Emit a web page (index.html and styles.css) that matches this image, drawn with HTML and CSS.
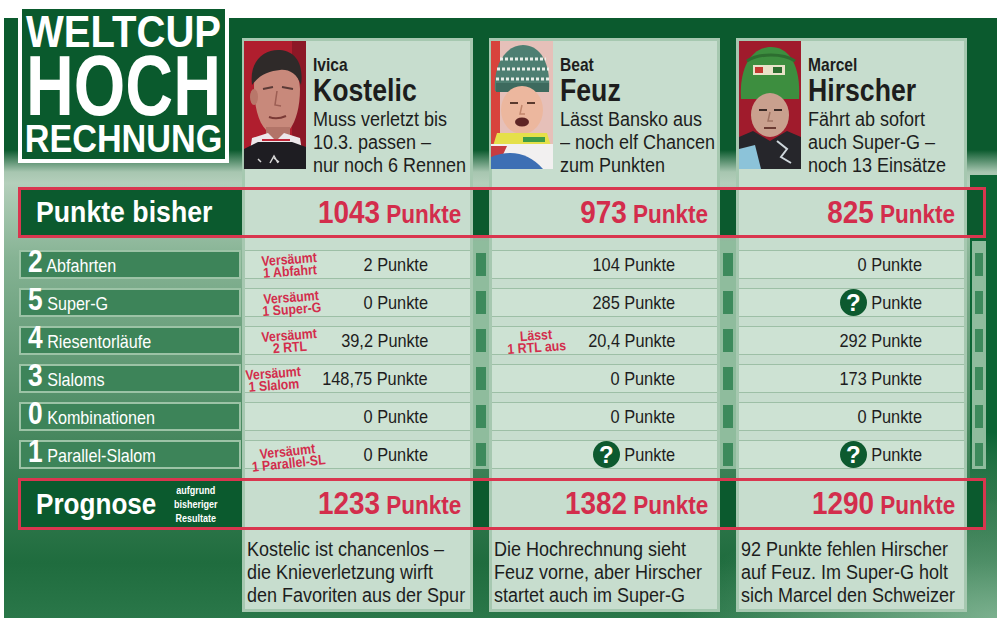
FILE: index.html
```html
<!DOCTYPE html>
<html lang="de">
<head>
<meta charset="utf-8">
<title>Weltcup Hochrechnung</title>
<link rel="stylesheet" href="styles.css">
</head>
<body>
<div class="board">
  <div class="grid">
    <div class="band r2"></div>
    <div class="frame r2"></div>
    <div class="band pband r9"></div>
    <div class="frame pband r9"></div>

    <div class="card k1"></div>
    <div class="card k2"></div>
    <div class="card k3"></div>

    <div class="title k0 r1">
      <div class="tl t1"><span>WELTCUP</span></div>
      <div class="tl t2"><span>HOCH</span></div>
      <div class="tl t3"><span>RECHNUNG</span></div>
    </div>

    <div class="player k1 r1">
      <svg class="photo" viewBox="0 0 62 128" width="62" height="128">
        <rect width="62" height="128" fill="#b01e2e"/>
        <rect x="48" width="14" height="128" fill="#8c1826"/>
        <path d="M10 44 C10 28 22 22 34 23 C48 24 56 34 56 48 C56 66 52 80 46 88 C40 95 28 95 22 89 C14 81 10 64 10 44 Z" fill="#c8897b"/>
        <ellipse cx="10" cy="56" rx="4" ry="8" fill="#b8776a"/>
        <path d="M8 44 C5 20 20 8 36 9 C52 10 60 24 57 44 C53 32 44 28 36 29 C26 30 16 33 8 44 Z" fill="#2f2a29"/>
        <path d="M19 48 L29 46 M38 46 L49 48" stroke="#5a3a36" stroke-width="2"/>
        <path d="M33 50 L31 64 L37 65" stroke="#9c5e54" fill="none" stroke-width="1.5"/>
        <path d="M25 76 Q33 79 42 75" stroke="#7a3a36" stroke-width="2" fill="none"/>
        <rect x="22" y="86" width="24" height="14" fill="#b27468"/>
        <path d="M8 97 L24 92 L32 100 L40 92 L56 97 L58 110 L6 110 Z" fill="#ece8ea"/>
        <path d="M18 99 L46 99" stroke="#c0283a" stroke-width="2"/>
        <path d="M0 108 L14 101 L48 101 L62 106 L62 128 L0 128 Z" fill="#1e1d22"/>
        <path d="M26 122 l4 -7 l4 7 M30 117 l5 4 M14 118 l3 3" stroke="#d8d8d8" stroke-width="1.5" fill="none"/>
      </svg>
      <div class="ptext">
        <div class="first">Ivica</div>
        <div class="last">Kostelic</div>
        <div class="desc">Muss verletzt bis<br>10.3. passen –<br>nur noch 6 Rennen</div>
      </div>
    </div>

    <div class="player k2 r1">
      <svg class="photo" viewBox="0 0 62 128" width="62" height="128">
        <rect width="62" height="128" fill="#e6c0b9"/>
        <rect width="9" height="128" fill="#d8433c"/>
        <path d="M4 50 C2 22 16 4 32 4 C48 4 60 20 58 50 Z" fill="#4e7f72"/>
        <path d="M9 18 H55 M6 28 H58 M5 38 H58" stroke="#e9efe9" stroke-width="3" stroke-dasharray="3 2"/>
        <rect x="5" y="42" width="53" height="9" fill="#3d6a5e"/>
        <ellipse cx="31" cy="69" rx="21" ry="24" fill="#ecb79e"/>
        <path d="M19 62 h8 M36 62 h8" stroke="#5a3a2e" stroke-width="2"/>
        <path d="M31 64 L29 73 L34 73" stroke="#c2866c" stroke-width="1.5" fill="none"/>
        <ellipse cx="31" cy="81" rx="7" ry="4.5" fill="#5e2424"/>
        <path d="M6 92 L56 92 L60 105 L2 105 Z" fill="#e5e04a"/>
        <rect x="32" y="96" width="22" height="5" fill="#3e9b48"/>
        <path d="M0 103 L62 103 L62 128 L0 128 Z" fill="#f2f0f0"/>
        <path d="M0 105 L16 105 L10 118 L0 118 Z" fill="#c73c40"/>
        <path d="M0 116 C20 108 38 112 52 128 L0 128 Z" fill="#3d6fb4"/>
      </svg>
      <div class="ptext">
        <div class="first">Beat</div>
        <div class="last">Feuz</div>
        <div class="desc">Lässt Bansko aus<br>– noch elf Chancen<br>zum Punkten</div>
      </div>
    </div>

    <div class="player k3 r1">
      <svg class="photo" viewBox="0 0 62 128" width="62" height="128">
        <rect width="62" height="128" fill="#a01b2c"/>
        <path d="M2 58 C0 24 14 6 32 6 C50 6 62 24 60 58 Z" fill="#3d8e3f"/>
        <path d="M8 20 C20 12 44 12 56 20" stroke="#2d6e30" stroke-width="3" fill="none"/>
        <rect x="14" y="24" width="32" height="10" fill="#e8e2c8"/>
        <rect x="16" y="26" width="8" height="6" fill="#c23a32"/>
        <rect x="34" y="26" width="9" height="6" fill="#2d6e30"/>
        <ellipse cx="31" cy="74" rx="19" ry="22" fill="#c9a08e"/>
        <path d="M20 69 h8 M35 69 h8" stroke="#3a2a26" stroke-width="2"/>
        <path d="M31 71 L29 80 L34 80" stroke="#9e7262" stroke-width="1.5" fill="none"/>
        <path d="M25 87 h12" stroke="#6a3a32" stroke-width="2"/>
        <path d="M0 96 L14 90 L31 100 L48 90 L62 96 L62 128 L0 128 Z" fill="#26262b"/>
        <path d="M0 108 L16 104 L22 128 L0 128 Z" fill="#8cc3d9"/>
        <path d="M38 100 l10 8 l-6 8 l10 6" stroke="#cfd7dc" stroke-width="2" fill="none"/>
      </svg>
      <div class="ptext">
        <div class="first">Marcel</div>
        <div class="last">Hirscher</div>
        <div class="desc">Fährt ab sofort<br>auch Super-G –<br>noch 13 Einsätze</div>
      </div>
    </div>

    <!-- Punkte bisher -->
    <div class="blab k0 r2"><span class="sx">Punkte bisher</span></div>
    <div class="big k1 r2"><span class="bv"><span class="bn">1043</span><span class="bp"> Punkte</span></span></div>
    <div class="big k2 r2"><span class="bv"><span class="bn">973</span><span class="bp"> Punkte</span></span></div>
    <div class="big k3 r2"><span class="bv"><span class="bn">825</span><span class="bp"> Punkte</span></span></div>

    <!-- row 1 -->
    <div class="lab k0 r3"><span class="li"><span class="num">2</span> Abfahrten</span></div>
    <div class="val k1 r3"><span class="note n1">Versäumt<br>1 Abfahrt</span><span class="v">2 Punkte</span></div>
    <div class="val k2 r3"><span class="v">104 Punkte</span></div>
    <div class="val k3 r3"><span class="v">0 Punkte</span></div>
    <div class="stub k1 r3"></div><div class="stub k2 r3"></div><div class="stub rs kr r3"></div>

    <!-- row 2 -->
    <div class="lab k0 r4"><span class="li"><span class="num">5</span> Super-G</span></div>
    <div class="val k1 r4"><span class="note n1">Versäumt<br>1 Super-G</span><span class="v">0 Punkte</span></div>
    <div class="val k2 r4"><span class="v">285 Punkte</span></div>
    <div class="val k3 r4"><span class="q">?</span><span class="v">Punkte</span></div>
    <div class="stub k1 r4"></div><div class="stub k2 r4"></div><div class="stub rs kr r4"></div>

    <!-- row 3 -->
    <div class="lab k0 r5"><span class="li"><span class="num">4</span> Riesentorläufe</span></div>
    <div class="val k1 r5"><span class="note n1">Versäumt<br>2 RTL</span><span class="v">39,2 Punkte</span></div>
    <div class="val k2 r5"><span class="note n3">Lässt<br>1 RTL aus</span><span class="v">20,4 Punkte</span></div>
    <div class="val k3 r5"><span class="v">292 Punkte</span></div>
    <div class="stub k1 r5"></div><div class="stub k2 r5"></div><div class="stub rs kr r5"></div>

    <!-- row 4 -->
    <div class="lab k0 r6"><span class="li"><span class="num">3</span> Slaloms</span></div>
    <div class="val k1 r6"><span class="note n1">Versäumt<br>1 Slalom</span><span class="v">148,75 Punkte</span></div>
    <div class="val k2 r6"><span class="v">0 Punkte</span></div>
    <div class="val k3 r6"><span class="v">173 Punkte</span></div>
    <div class="stub k1 r6"></div><div class="stub k2 r6"></div><div class="stub rs kr r6"></div>

    <!-- row 5 -->
    <div class="lab k0 r7"><span class="li"><span class="num">0</span> Kombinationen</span></div>
    <div class="val k1 r7"><span class="v">0 Punkte</span></div>
    <div class="val k2 r7"><span class="v">0 Punkte</span></div>
    <div class="val k3 r7"><span class="v">0 Punkte</span></div>
    <div class="stub k1 r7"></div><div class="stub k2 r7"></div><div class="stub rs kr r7"></div>

    <!-- row 6 -->
    <div class="lab k0 r8"><span class="li"><span class="num">1</span> Parallel-Slalom</span></div>
    <div class="val k1 r8"><span class="note n2">Versäumt<br>1 Parallel-SL</span><span class="v">0 Punkte</span></div>
    <div class="val k2 r8"><span class="q">?</span><span class="v">Punkte</span></div>
    <div class="val k3 r8"><span class="q">?</span><span class="v">Punkte</span></div>
    <div class="stub k1 r8"></div><div class="stub k2 r8"></div><div class="stub rs kr r8"></div>

    <!-- Prognose -->
    <div class="plab k0 r9"><span class="pbig">Prognose</span><span class="psmall">aufgrund<br>bisheriger<br>Resultate</span></div>
    <div class="big pv k1 r9"><span class="bv"><span class="bn">1233</span><span class="bp"> Punkte</span></span></div>
    <div class="big pv k2 r9"><span class="bv"><span class="bn">1382</span><span class="bp"> Punkte</span></span></div>
    <div class="big pv k3 r9"><span class="bv"><span class="bn">1290</span><span class="bp"> Punkte</span></span></div>

    <!-- footer -->
    <div class="foot k1 r10"><div class="ft">Kostelic ist chancenlos –<br>die Knieverletzung wirft<br>den Favoriten aus der Spur</div></div>
    <div class="foot k2 r10"><div class="ft">Die Hochrechnung sieht<br>Feuz vorne, aber Hirscher<br>startet auch im Super-G</div></div>
    <div class="foot k3 r10"><div class="ft">92 Punkte fehlen Hirscher<br>auf Feuz. Im Super-G holt<br>sich Marcel den Schweizer</div></div>
  </div>
</div>
</body>
</html>
```

FILE: styles.css
```css
:root {
  --fc: "Liberation Sans", Arial, sans-serif;
  --red: #d32d4c;
  --frame: #d9364f;
  --dk: #0b5a2e;
  --card: #c7ddce;
  --cell: #cde2d3;
}

html, body {
  margin: 0;
  background: #ffffff;
}

body {
  font-family: var(--fc);
  color: #1d1d1d;
}

.board {
  margin: 18px 3px 4px 4px;
  height: 600px;
  box-sizing: border-box;
  padding: 0 0 6px 14px;
  background:
    linear-gradient(to bottom, #0b6434 0, #0b6434 78%, rgba(11, 100, 52, 0)) right 0 top 157px / 27px 330px no-repeat,
    radial-gradient(ellipse 320px 120px at 100% 100%, rgba(150, 195, 165, 0.75), rgba(150, 195, 165, 0)),
    linear-gradient(to bottom, #0b5a2e 0, #0b5a2e 132px, #a7c6b0 154px, #b4cfbb 165px, #86b394 240px, #3f8258 440px, #1f6c3e 545px, #2a7749 600px);
}

.grid {
  display: grid;
  grid-template-columns: 224px 247px 247px 231px 19px;
  grid-template-rows: 169px 54px repeat(6, 38px) 61px 82px;
}

.k0 { grid-column: 1; }
.k1 { grid-column: 2; }
.k2 { grid-column: 3; }
.k3 { grid-column: 4; }
.kr { grid-column: 5; }

.r1 { grid-row: 1; }
.r2 { grid-row: 2; }
.r3 { grid-row: 3; }
.r4 { grid-row: 4; }
.r5 { grid-row: 5; }
.r6 { grid-row: 6; }
.r7 { grid-row: 7; }
.r8 { grid-row: 8; }
.r9 { grid-row: 9; }
.r10 { grid-row: 10; }

/* red-framed bands */
.band,
.frame {
  grid-column: 1 / 6;
  align-self: start;
  height: 51px;
  box-sizing: border-box;
}
.band {
  background: var(--dk);
  z-index: 0;
}
.frame {
  border: 3px solid var(--frame);
  z-index: 5;
}
.band.pband,
.frame.pband {
  margin-top: 9px;
  height: 52px;
}

/* player cards */
.card {
  grid-row: 1 / 11;
  margin-top: 20px;
  background: var(--card);
  border: 3px solid #a6c8b0;
  z-index: 1;
}
.card.k1,
.card.k2 {
  margin-right: 16px;
}

/* title */
.title {
  z-index: 3;
  justify-self: start;
  align-self: start;
  margin-top: -13px;
  width: 211px;
  height: 158px;
  box-sizing: border-box;
  border: 4px solid #ffffff;
  background: #0a5a2d;
  color: #ffffff;
  font-weight: 700;
  white-space: nowrap;
  padding-top: 5px;
}
.tl {
  display: flex;
  justify-content: center;
}
.t1 {
  font-size: 45px;
  line-height: 36px;
  transform: scaleX(0.89);
}
.t2 {
  font-size: 86px;
  line-height: 66px;
  margin-top: 2px;
  transform: scaleX(0.77);
}
.t3 {
  font-size: 38px;
  line-height: 34px;
  margin-top: 4px;
  transform: scaleX(0.9);
}

/* player header */
.player {
  z-index: 2;
  display: flex;
  align-items: flex-start;
  padding: 23px 0 0 2px;
}
.player.k3 {
  padding-left: 3px;
}
.photo {
  display: block;
  flex: none;
}
.ptext {
  margin-left: 7px;
  margin-top: 14px;
  white-space: nowrap;
}
.first,
.last,
.desc {
  transform-origin: left center;
}
.first {
  font-size: 19px;
  line-height: 19px;
  font-weight: 700;
  transform: scaleX(0.82);
}
.last {
  font-size: 31px;
  line-height: 34px;
  font-weight: 700;
  transform: scaleX(0.86);
}
.desc {
  font-size: 20px;
  line-height: 23px;
  transform: scaleX(0.9);
}

/* Punkte bisher + Prognose */
.blab {
  z-index: 3;
  align-self: start;
  height: 51px;
  display: flex;
  align-items: center;
  padding-left: 18px;
  color: #ffffff;
  font-size: 29px;
  font-weight: 700;
  white-space: nowrap;
}
.sx {
  display: inline-block;
  transform: scaleX(0.92);
  transform-origin: left center;
}
.big {
  z-index: 3;
  align-self: start;
  height: 51px;
  display: flex;
  align-items: center;
  justify-content: flex-end;
  padding-right: 12px;
  color: var(--red);
  font-weight: 700;
  white-space: nowrap;
}
.big.k1,
.big.k2 {
  margin-right: 16px;
}
.big.pv {
  margin-top: 9px;
  height: 52px;
}
.bv {
  display: inline-block;
  transform: scaleX(0.9);
  transform-origin: right center;
}
.bn {
  font-size: 31px;
}
.bp {
  font-size: 25px;
}

.plab {
  z-index: 3;
  align-self: start;
  margin-top: 9px;
  height: 52px;
  display: flex;
  align-items: center;
  padding-left: 18px;
  color: #ffffff;
  font-weight: 700;
  white-space: nowrap;
}
.pbig {
  display: inline-block;
  font-size: 30px;
  transform: scaleX(0.87);
  transform-origin: left center;
}
.psmall {
  display: inline-block;
  font-size: 11px;
  line-height: 14px;
  text-align: center;
  transform: scaleX(0.82);
  transform-origin: left center;
}

/* data rows */
.lab {
  z-index: 2;
  align-self: start;
  margin: 9px 1px 0 1px;
  height: 29px;
  box-sizing: border-box;
  background: #3d8459;
  border: 2px solid #9cc3a6;
  padding-left: 7px;
  color: #ffffff;
  font-size: 19px;
  line-height: 22px;
  white-space: nowrap;
}
.li {
  display: inline-block;
  transform: scaleX(0.85);
  transform-origin: left center;
}
.num {
  font-size: 31px;
  line-height: 20px;
  font-weight: 700;
}

.val {
  z-index: 2;
  align-self: start;
  margin: 9px 19px 0 3px;
  height: 29px;
  box-sizing: border-box;
  background: var(--cell);
  border-top: 1px solid #9dbfa6;
  border-bottom: 1px solid #9dbfa6;
  display: flex;
  align-items: center;
  justify-content: flex-end;
  padding-right: 42px;
  font-size: 19px;
  white-space: nowrap;
}
.val.k3 {
  margin-right: 3px;
}
.v {
  display: inline-block;
  transform: scaleX(0.86);
  transform-origin: right center;
}

.note {
  margin-right: auto;
  margin-left: 13px;
  color: var(--red);
  font-weight: 700;
  font-size: 14px;
  line-height: 12px;
  text-align: center;
  transform: rotate(-4deg) scaleX(0.88);
}
.note.n2 {
  margin-left: 1px;
  margin-top: 4px;
  transform: rotate(-6deg) scaleX(0.88);
}
.note.n3 {
  margin-left: 11px;
}

.q {
  width: 27px;
  height: 27px;
  flex: none;
  border-radius: 50%;
  background: #0d5a2f;
  color: #ffffff;
  font-weight: 700;
  font-size: 24px;
  line-height: 27px;
  text-align: center;
  margin-right: -4px;
}

.stub {
  z-index: 2;
  justify-self: end;
  width: 16px;
  height: 38px;
  box-sizing: border-box;
  padding: 12px 3px 3px;
  background: linear-gradient(#3d8a5c, #3d8a5c) content-box, #8fbc9d;
}
.stub.rs {
  width: 14px;
}

/* footer text */
.foot {
  z-index: 2;
  padding: 8px 0 0 5px;
  white-space: nowrap;
}
.foot.k1,
.foot.k2 {
  margin-right: 16px;
}
.ft {
  font-size: 20px;
  line-height: 23px;
  transform: scaleX(0.9);
  transform-origin: left top;
}
```
